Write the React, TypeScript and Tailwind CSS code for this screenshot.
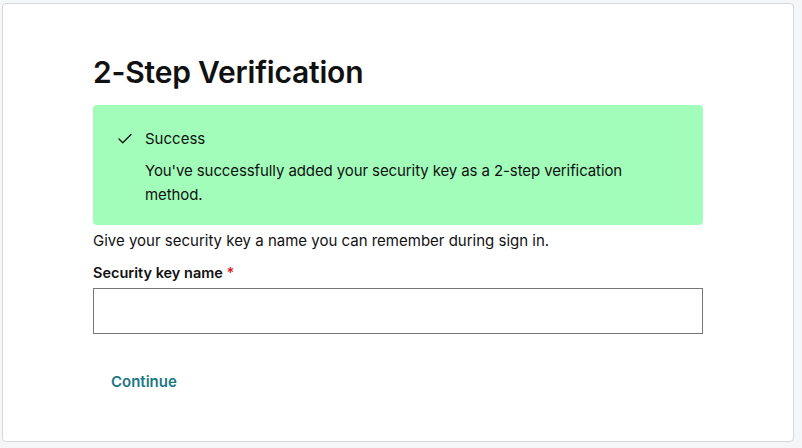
import { Check } from 'lucide-react';

export default function App() {
    return (
        <div className="min-h-[448px] w-[802px] bg-[#f5f6f8] pl-[2px] pt-[3px] pr-[8px] pb-[6px] font-['Inter','Liberation_Sans',sans-serif] text-[#111]">
            <div className="h-[439px] rounded-[4px] border border-[#d6d8dc] bg-white px-[90px] pt-[46px]">
                <h1 className="text-[30px] font-semibold leading-[44px] tracking-[-0.2px] text-[#111]">
                    2-Step Verification
                </h1>

                {/* Success alert */}
                <div className="mt-[11px] rounded-[4px] bg-[#a1fdb9] pl-[23px] pr-6 pt-[22px] pb-[18px]">
                    <div className="flex items-center gap-[11px] h-6">
                        <Check size={18} strokeWidth={1.75} className="text-[#111]" />
                        <span className="text-[15px] leading-6">Success</span>
                    </div>
                    <p className="ml-[29px] mt-2 text-[15px] leading-6 tracking-[-0.1px]">
                        You've successfully added your security key as a 2-step verification method.
                    </p>
                </div>

                <p className="text-[15px] leading-[32px]">
                    Give your security key a name you can remember during sign in.
                </p>

                <label className="mt-[6px] block text-[14.5px] font-semibold leading-5">
                    Security key name <span className="text-[#d61a1a]">*</span>
                </label>
                <input
                    type="text"
                    className="mt-[5px] block h-[46px] w-full border border-[#767676] bg-white px-3 outline-none"
                />

                <button className="mt-[36px] px-[18px] text-[15px] font-semibold leading-6 text-[#1b7885]">
                    Continue
                </button>
            </div>
        </div>
    );
}
